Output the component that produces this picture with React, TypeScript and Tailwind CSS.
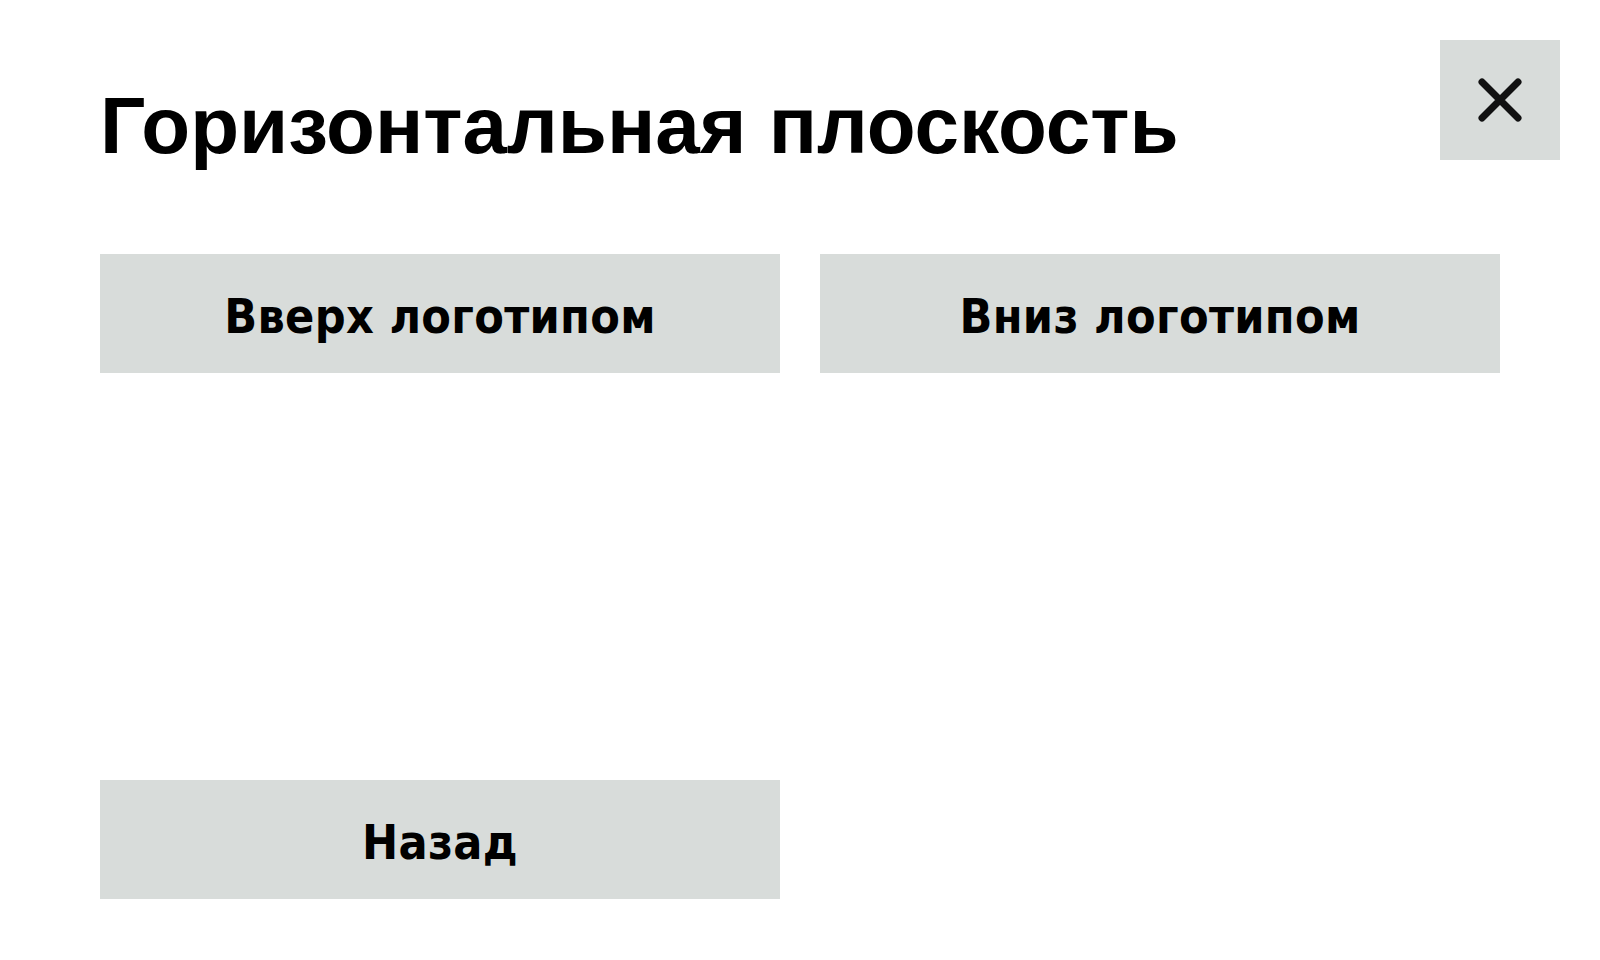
function ChoiceButton({ label }: { label: string }) {
  return (
    <button className="flex h-[119px] w-full items-center justify-center bg-[#d8dcda] pt-[4px] text-[48px] font-bold tracking-[0.3px] text-black font-['DejaVu_Sans_Condensed','DejaVu_Sans',sans-serif] [font-stretch:condensed]">
      {label}
    </button>
  );
}

function CloseIcon() {
  return (
    <svg width="44" height="44" viewBox="0 0 44 44" fill="none">
      <path
        d="M4 4L40 40M40 4L4 40"
        stroke="#111"
        strokeWidth="7"
        strokeLinecap="round"
      />
    </svg>
  );
}

export default function App() {
  return (
    <div className="h-[960px] w-[1600px] bg-white">
      {/* Header */}
      <div className="flex items-start justify-between pl-[100px] pr-[40px] pt-[40px]">
        <h1 className="mt-[46px] text-[80px] font-bold leading-none text-black font-['Liberation_Sans',Arial,sans-serif]">
          Горизонтальная плоскость
        </h1>
        <button className="flex h-[120px] w-[120px] items-center justify-center bg-[#d8dcda]">
          <CloseIcon />
        </button>
      </div>

      {/* Options */}
      <div className="mt-[88px] grid grid-cols-2 gap-[40px] px-[100px]">
        <ChoiceButton label="Вверх логотипом" />
        <ChoiceButton label="Вниз логотипом" />
      </div>

      <div className="mt-[407px] grid grid-cols-2 gap-[40px] px-[100px]">
        <ChoiceButton label="Назад" />
      </div>
    </div>
  );
}
